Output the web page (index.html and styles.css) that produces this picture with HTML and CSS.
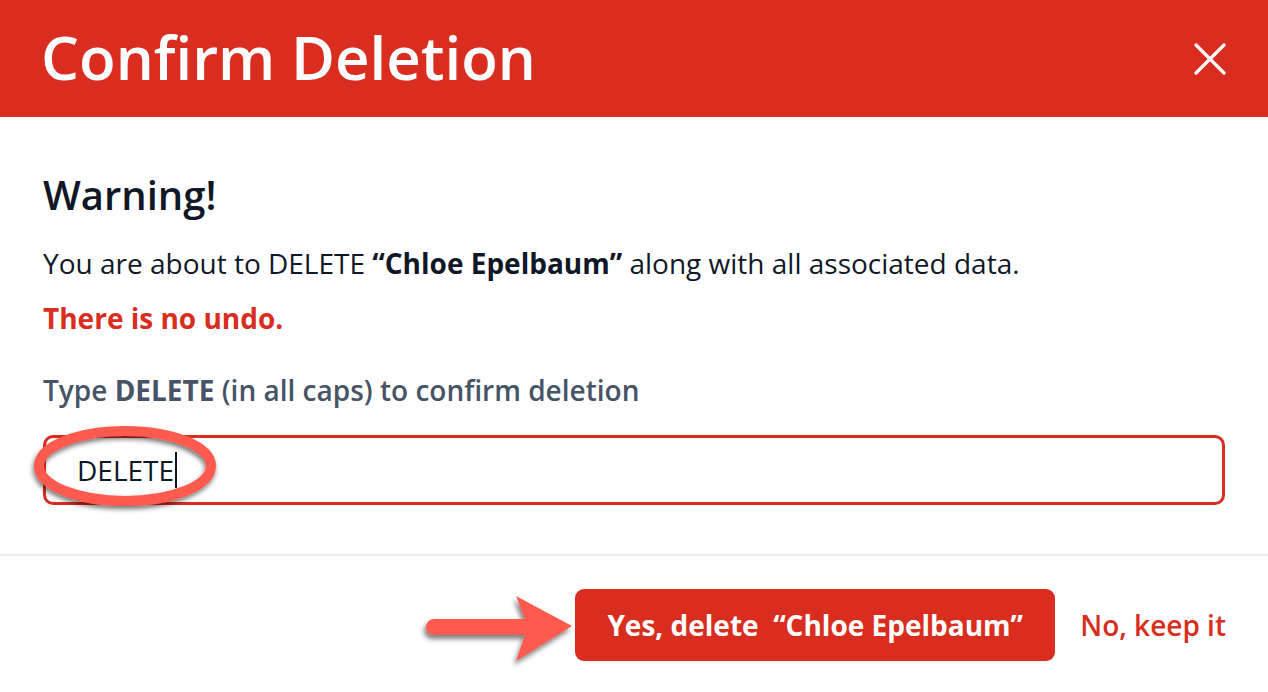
FILE: index.html
```html
<!DOCTYPE html>
<html lang="en">
<head>
<meta charset="utf-8">
<title>Confirm Deletion</title>
<link rel="stylesheet" href="styles.css">
</head>
<body>
<div class="modal">
  <header class="modal-header">
    <h1 class="modal-title">Confirm Deletion</h1>
    <button class="close-btn" aria-label="Close">
      <svg width="32" height="32" viewBox="0 0 32 32"><path d="M2 2L30 30M30 2L2 30" stroke="#fff" stroke-width="3.2" stroke-linecap="round"/></svg>
    </button>
  </header>
  <section class="modal-body">
    <h2 class="warning">Warning!</h2>
    <p class="message">You are about to DELETE <strong>“Chloe Epelbaum”</strong> along with all associated data.</p>
    <p class="no-undo">There is no undo.</p>
    <label class="confirm-label" for="confirm">Type <strong>DELETE</strong> (in all caps) to confirm deletion</label>
    <div class="input-wrap">
      <div class="confirm-input" id="confirm"><span class="typed">DELETE</span><span class="caret"></span></div>
      <svg class="ellipse-mark" width="220" height="110" viewBox="0 0 220 110">
        <defs>
          <filter id="sh1" x="-20%" y="-30%" width="140%" height="170%">
            <feDropShadow dx="-1" dy="3" stdDeviation="2.5" flood-color="#000" flood-opacity="0.55"/>
          </filter>
        </defs>
        <ellipse cx="110" cy="52" rx="86" ry="35" fill="none" stroke="#ff5a4e" stroke-width="10" filter="url(#sh1)"/>
      </svg>
    </div>
  </section>
  <footer class="modal-footer">
    <svg class="arrow-mark" width="170" height="90" viewBox="0 0 170 90">
      <defs>
        <filter id="sh2" x="-20%" y="-30%" width="140%" height="170%">
          <feDropShadow dx="-2" dy="4" stdDeviation="2.5" flood-color="#000" flood-opacity="0.5"/>
        </filter>
      </defs>
      <path d="M15 36 L106 36 L97 13 L153 43 L97 78 L106 52 L15 52 A8 8 0 0 1 15 36 Z" fill="#ff5a4e" filter="url(#sh2)"/>
    </svg>
    <button class="btn-delete">Yes, delete&nbsp; “Chloe Epelbaum”</button>
    <button class="btn-keep">No, keep it</button>
  </footer>
</div>
</body>
</html>
```

FILE: styles.css
```css
* { box-sizing: border-box; }
html, body { margin: 0; padding: 0; background: #fff; }
body {
  font-family: "Open Sans", "Noto Sans", sans-serif;
  color: #101828;
  width: 1268px;
  height: 692px;
  overflow: hidden;
}
.modal { width: 1268px; height: 692px; display: flex; flex-direction: column; }
.modal-header {
  height: 117px;
  background: #d92d20;
  display: flex;
  align-items: center;
  justify-content: space-between;
  padding: 0 42px 0 41px;
}
.modal-title {
  margin: 0 0 4px 0;
  color: #fff;
  font-size: 60px;
  font-weight: 600;
  line-height: 1;
}
.close-btn {
  background: none;
  border: 0;
  padding: 0;
  width: 32px;
  height: 32px;
  display: flex;
  cursor: pointer;
}
.modal-body { padding: 54px 43px 0 43px; display: flex; flex-direction: column; }
.warning { margin: 0; font-size: 40px; font-weight: 600; line-height: 48px; color: #101828; }
.message { margin: 26px 0 0 0; font-size: 28px; line-height: 36px; color: #101828; }
.message strong { font-weight: 700; }
.no-undo { margin: 19px 0 0 0; font-size: 28px; line-height: 36px; font-weight: 700; color: #d92d20; }
.confirm-label { margin: 36px 0 0 0; font-size: 28px; line-height: 36px; font-weight: 600; color: #475467; }
.confirm-label strong { font-weight: 700; }
.input-wrap { position: relative; margin-top: 27px; }
.confirm-input {
  height: 70px;
  border: 3px solid #d92d20;
  border-radius: 10px;
  display: flex;
  align-items: center;
  padding-left: 31px;
  font-size: 28px;
  color: #101828;
}
.caret { width: 2px; height: 36px; background: #101828; margin-left: 1px; }
.ellipse-mark { position: absolute; left: -28px; top: -21px; }
.modal-footer {
  position: relative;
  margin-top: 49px;
  border-top: 2px solid #eaecf0;
  padding: 33px 42px 0 0;
  display: flex;
  justify-content: flex-end;
  align-items: center;
  gap: 25px;
}
.btn-delete {
  height: 72px;
  width: 480px;
  background: #d92d20;
  color: #fff;
  border: 0;
  border-radius: 9px;
  font-family: inherit;
  font-size: 28px;
  font-weight: 700;
  padding: 0;
  box-shadow: 0 1px 2px rgba(16,24,40,0.08);
}
.btn-keep {
  background: none;
  border: 0;
  padding: 0;
  color: #d92d20;
  font-family: inherit;
  font-size: 28px;
  font-weight: 600;
}
.arrow-mark { position: absolute; left: 419px; top: 27px; }
```
